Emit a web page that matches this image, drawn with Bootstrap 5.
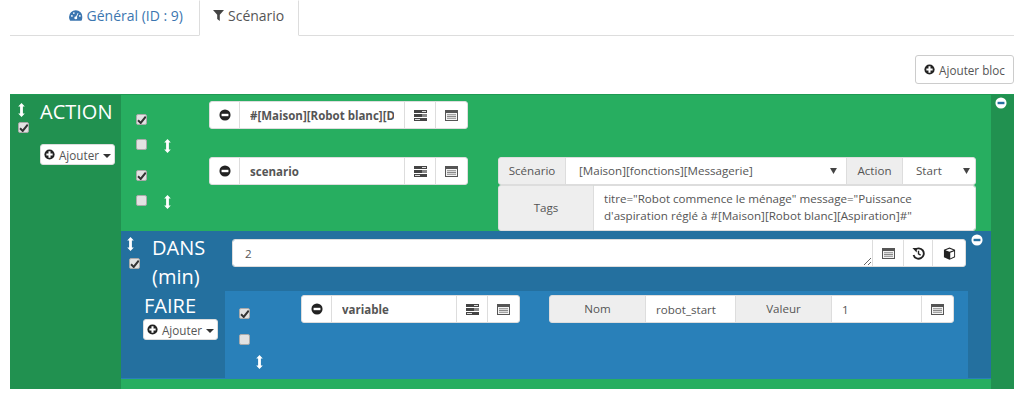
<!DOCTYPE html>
<html lang="fr">
<head>
<meta charset="utf-8">
<title>Scénario</title>
<link href="https://cdn.jsdelivr.net/npm/bootstrap@5.3.0/dist/css/bootstrap.min.css" rel="stylesheet">
<style>
html,body{height:400px;overflow:hidden}
body{font-family:"Open Sans","Liberation Sans",sans-serif;font-size:12px;color:#555;background:#fff}
.sc-tabs{margin:0 10px;height:36px;border-bottom:1px solid #ddd;padding-left:49px;flex-wrap:nowrap}
.sc-tabs .nav-link{font-size:14px;height:36px;padding:0 9px 5px;border-radius:0;color:#3c76b0;border:1px solid transparent;line-height:26px;margin:0;white-space:nowrap;width:134px}
.sc-tabs .nav-link.active{color:#555;border-color:transparent #ddd #fff;width:100px;padding-left:13px;margin-left:6px}
.sc-bar{height:58px;margin:0 10px;padding-top:19px}
.sc-addbloc{height:29px;width:99px;padding:0;font-size:11.7px;color:#555;border:1px solid #ccc;background:#fff;border-radius:3px;line-height:26px}
.sc-outer{height:295px;margin:0 10px;background:#27ae60;border-top:1px solid #1f9a53;color:#fff}
.sc-side{width:111px;flex:none;background:#219150;padding:8px 0 0 8px}
.sc-sidehead{gap:10px}
.sc-arrowcol{width:12px;flex:none;gap:5px}
.sc-arrow{display:block;width:7px;height:14px;flex:none}
.sc-title{font-size:20px;line-height:29px;color:#fff;margin:0;font-weight:400}
.sc-title-top{margin-top:-6px}
.sc-add{height:21px;width:75px;padding:0;background:#fff;color:#555;border:1px solid #ddd;border-radius:3px;font-size:11.7px;line-height:18px;white-space:nowrap}
.sc-add-top{margin-top:18px}
.sc-add .dropdown-toggle::after{margin-left:0;border-top-width:4px;border-left-width:4px;border-right-width:4px;color:#333;vertical-align:2px}
.sc-check{appearance:none;display:block;width:11px;height:11px;flex:none;background:#e2e2e2 center/10px no-repeat;border:1px solid #aaa;border-radius:2px;margin:0}
.sc-check:checked{background-image:url("data:image/svg+xml,%3Csvg xmlns='http://www.w3.org/2000/svg' viewBox='0 0 10 10'%3E%3Cpath d='M1.5 5.5 4 8l4.800-6' fill='none' stroke='%23333' stroke-width='1.900'/%3E%3C/svg%3E")}
.sc-main{min-width:0;padding-top:6px}
.sc-row{height:56px}
.sc-row2{height:74px}
.sc-checks{width:88px;flex:none;padding:13px 0 0 15px}
.sc-checks .sc-arrow{margin:0 0 0 17px}
.sc-check2{margin-top:14px}
.sc-group{height:28px;flex-wrap:nowrap}
.sc-group>*{height:28px;font-size:11.6px;color:#555;border-color:#ddd;border-radius:3px}
.sc-group .input-group-text{background:#fff;justify-content:center;padding:0}
.sc-group .sc-lab{background:#eee;font-size:11.6px;border-color:#ddd}
.sc-group .form-control,.sc-group .form-select{padding:0 10px;box-shadow:none;min-width:0;min-height:0}
.sc-group .sc-bold{font-weight:700;font-size:11.500px}
.sc-name{width:259px;flex:none}
.sc-name-blue{width:219px;flex:none}
.sc-ic{width:30px;flex:none}
.sc-ic-31{width:31px;flex:none}
.sc-ic-32{width:32px;flex:none}
.sc-ic-33{width:33px;flex:none}
.sc-ic-34{width:34px;flex:none}
.sc-icon{width:13px;height:13px;display:block}
.sc-params{width:478px;flex:none;margin-left:30px}
.sc-group .form-select{background-image:url("data:image/svg+xml,%3Csvg xmlns='http://www.w3.org/2000/svg' viewBox='0 0 8 7'%3E%3Cpath d='M0 0h8L4 7z' fill='%23444'/%3E%3C/svg%3E");background-size:7px 6px;background-position:right 9px center;padding-left:13px}
.sc-group .sc-sel-action{background-position:right 5px center;width:74px;flex:none}
.sc-lab-sc{width:68px;flex:none}
.sc-lab-ac{width:57px;flex:none}
.sc-tagsrow{height:46px;margin-top:0}
.sc-tagsrow>*{height:46px}
.sc-tags{width:96px;flex:none}
.sc-group textarea.sc-tagarea{padding:4px 10px;line-height:17px;resize:none;overflow:hidden}
.sc-minus{width:12px;height:12px;display:block}
.sc-blue{height:148px;background:#2980b9}
.sc-bluetop{height:60px;background:#24709f;padding:6px 0 0 6px}
.sc-dans{width:105px;flex:none;gap:13px}
.sc-dans .sc-arrowcol{gap:7px}
.sc-dans .sc-check{margin-left:2px}
.sc-dans .sc-title{line-height:29px;margin-top:-4px;width:60px}
.sc-dansgroup{height:28px;width:734px;flex:none;margin-top:2px}
.sc-dansgroup>*{height:28px}
.sc-group textarea.sc-dur{padding:4px 12px;line-height:20px;resize:vertical}
.sc-minus-blue{margin-top:-3px}
.sc-bluelow{height:87px}
.sc-faire{width:104px;flex:none;background:#24709f;padding:2px 0 0 23px}
.sc-faire .sc-add{margin-left:-1px}
.sc-faire .sc-title{line-height:26px}
.sc-panel{min-width:0;padding-top:4px}
.sc-blue-checks{width:76px;flex:none;padding:13px 0 0 14px}
.sc-blue-checks .sc-check2{margin-top:15px}
.sc-blue-checks .sc-arrow{margin:10px 0 0 17px}
.sc-bparams{width:404px;flex:none;margin-left:29px}
.sc-nv-lab{width:97px;flex:none}
.sc-group .sc-nv-in{width:91px;flex:none}
.sc-right{width:23px;flex:none;background:#24709f}
.sc-clear{width:23px;flex:none;background:#219150;padding:2px 0 0 4px}
</style>
</head>
<body>
<svg width="0" height="0" class="d-block" aria-hidden="true">
<defs>
<symbol id="i-arrow" viewBox="0 0 7 14"><path d="M3.500 0 6.800 3.600H4.900V10.400H6.800L3.500 14 .2 10.400H2.100V3.600H.2Z" fill="#fff"/></symbol>
<symbol id="i-minus" viewBox="0 0 14 14"><circle cx="7" cy="7" r="6.500" fill="#222"/><rect x="3" y="5.600" width="8" height="2.800" fill="#fff"/></symbol>
<symbol id="i-minus-w" viewBox="0 0 14 14"><circle cx="7" cy="7" r="6.500" fill="#fff"/><rect x="3" y="5.600" width="8" height="2.800" fill="#24709f"/></symbol>
<symbol id="i-plus" viewBox="0 0 14 14"><circle cx="7" cy="7" r="6.500" fill="#222"/><path d="M3 5.700h2.700V3h2.600v2.700H11v2.600H8.300v2.700H5.700V8.300H3Z" fill="#fff"/></symbol>
<symbol id="i-slid" viewBox="0 0 13 11"><path d="M0 0h13v3H0Z" fill="#444"/><path d="M0 4h13v3H0Z" fill="#888"/><path d="M0 4h8v3H0Z" fill="#444"/><path d="M0 8h13v3H0Z" fill="#444"/><path d="M8 1h4v1H8ZM1 9h5v1H1Z" fill="#ddd"/></symbol>
<symbol id="i-list" viewBox="0 0 13 11"><path d="M0 0h13v11H0Z" fill="#555"/><path d="M1 3h11v7H1Z" fill="#f4f4f4"/><path d="M2 4.200h9v1H2ZM2 6h9v1H2ZM2 7.800h9v1H2Z" fill="#888"/></symbol>
<symbol id="i-hist" viewBox="0 0 14 14"><path d="M3 3.200A5.600 5.600 0 1 1 1.700 8.500" fill="none" stroke="#222" stroke-width="2"/><path d="M.5 1.200 5.400 1 5 5.800Z" fill="#222"/><path d="M7 4v3.400l2.300 1.300" fill="none" stroke="#222" stroke-width="1.500"/></symbol>
<symbol id="i-cube" viewBox="0 0 14 14"><path d="M7 .5 13 3v8l-6 2.800L1 11V3Z" fill="#222"/><path d="M7 1.800 11.300 3.500 7 5.200 2.700 3.500Z" fill="#fff"/><path d="M7.800 6.300 12 4.700v5.600L7.800 12.400Z" fill="#fff"/></symbol>
<symbol id="i-tacho" viewBox="0 0 14 11"><path d="M7 0a7 7 0 0 1 7 7 6.800 6.800 0 0 1-1 3.600 1 1 0 0 1-.9.400H1.900a1 1 0 0 1-.9-.4A6.800 6.800 0 0 1 0 7a7 7 0 0 1 7-7Z" fill="#3c76b0"/><circle cx="7" cy="8" r="1.500" fill="#fff"/><path d="M6.500 8 9 3l.8.3L7.500 8.300Z" fill="#fff"/><circle cx="3" cy="6" r=".9" fill="#fff"/><circle cx="11.200" cy="6" r=".9" fill="#fff"/><circle cx="5" cy="3" r=".9" fill="#fff"/></symbol>
<symbol id="i-filter" viewBox="0 0 11 11"><path d="M0 0h11L6.800 4.800V11L4.200 9V4.800Z" fill="#444"/></symbol>
</defs>
</svg>

<ul class="nav sc-tabs">
  <li class="nav-item"><a class="nav-link d-flex align-items-center gap-1" href="#"><svg width="14" height="11"><use href="#i-tacho"/></svg>Général (ID : 9)</a></li>
  <li class="nav-item"><a class="nav-link active d-flex align-items-center gap-1" href="#"><svg width="11" height="11"><use href="#i-filter"/></svg>Scénario</a></li>
</ul>

<div class="sc-bar d-flex justify-content-end">
  <button class="btn sc-addbloc d-flex align-items-center justify-content-center gap-1" type="button"><svg width="11" height="11"><use href="#i-plus"/></svg>Ajouter bloc</button>
</div>

<div class="sc-outer d-flex">
  <div class="sc-side">
    <div class="d-flex sc-sidehead">
      <div class="sc-arrowcol d-flex flex-column">
        <svg class="sc-arrow"><use href="#i-arrow"/></svg>
        <input class="sc-check" type="checkbox" checked aria-label="actif">
      </div>
      <div>
        <p class="sc-title sc-title-top">ACTION</p>
        <button class="btn sc-add sc-add-top d-flex align-items-center justify-content-center gap-1" type="button"><svg width="11" height="11"><use href="#i-plus"/></svg>Ajouter <span class="dropdown-toggle"></span></button>
      </div>
    </div>
  </div>

  <div class="sc-main flex-grow-1">
    <div class="sc-row d-flex">
      <div class="sc-checks">
        <input class="sc-check" type="checkbox" checked aria-label="actif">
        <div class="d-flex sc-check2"><input class="sc-check" type="checkbox" aria-label="parallèle"><svg class="sc-arrow"><use href="#i-arrow"/></svg></div>
      </div>
      <div class="input-group sc-group sc-name">
        <span class="input-group-text sc-ic-31"><svg class="sc-minus"><use href="#i-minus"/></svg></span>
        <input class="form-control sc-bold" value="#[Maison][Robot blanc][Démarrer]#" aria-label="commande">
        <span class="input-group-text sc-ic-32"><svg class="sc-icon"><use href="#i-slid"/></svg></span>
        <span class="input-group-text sc-ic-33"><svg class="sc-icon"><use href="#i-list"/></svg></span>
      </div>
    </div>

    <div class="sc-row2 d-flex">
      <div class="sc-checks">
        <input class="sc-check" type="checkbox" checked aria-label="actif">
        <div class="d-flex sc-check2"><input class="sc-check" type="checkbox" aria-label="parallèle"><svg class="sc-arrow"><use href="#i-arrow"/></svg></div>
      </div>
      <div class="input-group sc-group sc-name">
        <span class="input-group-text sc-ic-31"><svg class="sc-minus"><use href="#i-minus"/></svg></span>
        <input class="form-control sc-bold" value="scenario" aria-label="commande">
        <span class="input-group-text sc-ic-32"><svg class="sc-icon"><use href="#i-slid"/></svg></span>
        <span class="input-group-text sc-ic-33"><svg class="sc-icon"><use href="#i-list"/></svg></span>
      </div>
      <div class="sc-params">
        <div class="input-group sc-group">
          <span class="input-group-text sc-lab sc-lab-sc">Scénario</span>
          <select class="form-select" aria-label="Scénario"><option>[Maison][fonctions][Messagerie]</option></select>
          <span class="input-group-text sc-lab sc-lab-ac">Action</span>
          <select class="form-select sc-sel-action" aria-label="Action"><option>Start</option></select>
        </div>
        <div class="input-group sc-group sc-tagsrow">
          <span class="input-group-text sc-lab sc-tags">Tags</span>
          <textarea class="form-control sc-tagarea" aria-label="Tags">titre="Robot commence le ménage" message="Puissance d'aspiration réglé à #[Maison][Robot blanc][Aspiration]#"</textarea>
        </div>
      </div>
    </div>

    <div class="sc-blue d-flex flex-column">
      <div class="sc-bluetop d-flex">
        <div class="sc-dans d-flex">
          <div class="sc-arrowcol d-flex flex-column">
            <svg class="sc-arrow"><use href="#i-arrow"/></svg>
            <input class="sc-check" type="checkbox" checked aria-label="actif">
          </div>
          <p class="sc-title">DANS (min)</p>
        </div>
        <div class="input-group sc-group sc-dansgroup">
          <textarea class="form-control sc-dur" aria-label="durée">2</textarea>
          <span class="input-group-text sc-ic-32"><svg class="sc-icon"><use href="#i-list"/></svg></span>
          <span class="input-group-text sc-ic"><svg class="sc-icon"><use href="#i-hist"/></svg></span>
          <span class="input-group-text sc-ic-34"><svg class="sc-icon"><use href="#i-cube"/></svg></span>
        </div>
        <div class="flex-grow-1 d-flex justify-content-end pe-2"><svg class="sc-minus sc-minus-blue"><use href="#i-minus-w"/></svg></div>
      </div>
      <div class="sc-bluelow d-flex">
        <div class="sc-faire">
          <p class="sc-title">FAIRE</p>
          <button class="btn sc-add d-flex align-items-center justify-content-center gap-1" type="button"><svg width="11" height="11"><use href="#i-plus"/></svg>Ajouter <span class="dropdown-toggle"></span></button>
        </div>
        <div class="sc-panel flex-grow-1 d-flex">
          <div class="sc-blue-checks">
            <input class="sc-check" type="checkbox" checked aria-label="actif">
            <input class="sc-check sc-check2" type="checkbox" aria-label="parallèle">
            <svg class="sc-arrow"><use href="#i-arrow"/></svg>
          </div>
          <div class="input-group sc-group sc-name-blue">
            <span class="input-group-text sc-ic-31"><svg class="sc-minus"><use href="#i-minus"/></svg></span>
            <input class="form-control sc-bold" value="variable" aria-label="commande">
            <span class="input-group-text sc-ic-32"><svg class="sc-icon"><use href="#i-slid"/></svg></span>
            <span class="input-group-text sc-ic-33"><svg class="sc-icon"><use href="#i-list"/></svg></span>
          </div>
          <div class="input-group sc-group sc-bparams">
            <span class="input-group-text sc-lab sc-nv-lab">Nom</span>
            <input class="form-control sc-nv-in" value="robot_start" aria-label="Nom">
            <span class="input-group-text sc-lab sc-nv-lab">Valeur</span>
            <input class="form-control sc-nv-in" value="1" aria-label="Valeur">
            <span class="input-group-text sc-ic-33"><svg class="sc-icon"><use href="#i-list"/></svg></span>
          </div>
        </div>
        <div class="sc-right"></div>
      </div>
    </div>
  </div>

  <div class="sc-clear"><svg class="sc-minus"><use href="#i-minus-w"/></svg></div>
</div>
<script src="https://cdn.jsdelivr.net/npm/bootstrap@5.3.0/dist/js/bootstrap.bundle.min.js"></script>
</body>
</html>
